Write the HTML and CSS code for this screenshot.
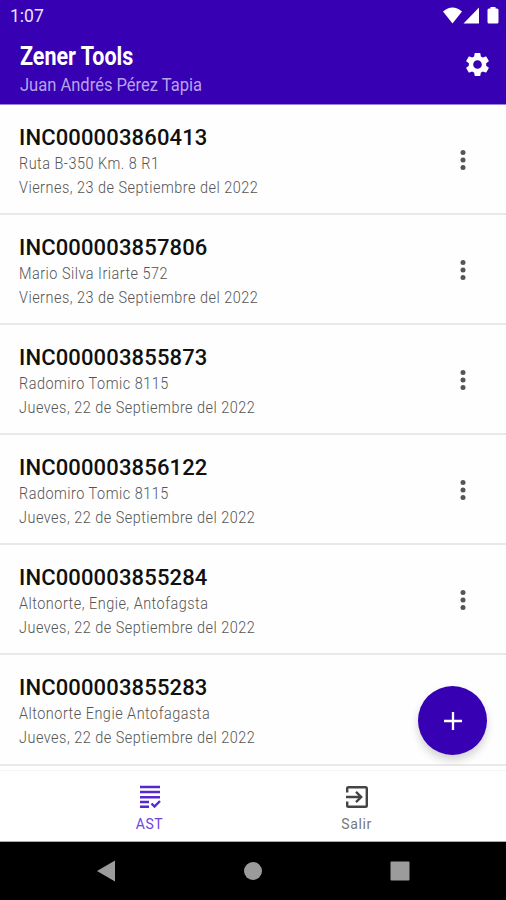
FILE: index.html
```html
<!DOCTYPE html>
<html lang="es">

<head>
  <meta charset="UTF-8">
  <meta name="viewport" content="width=device-width, initial-scale=1.0">
  <title>Zener Tools</title>
  <link rel="stylesheet" href="styles.css">
</head>

<body>

  <header class="cabecera">
    <div class="estado">
      <span class="hora">1:07</span>
      <svg class="senales" width="56" height="18" viewBox="0 0 56 18">
        <path d="M0 4.500Q9.500-3.500 19 4.500L9.500 16.500z" />
        <path d="M20.500 16.500L36 .5v16z" />
        <path d="M47.500 0h5v1.500h1.500q1.500 0 1.500 1.500v12q0 1.500-1.500 1.500h-8q-1.500 0-1.500-1.500V3q0-1.500 1.500-1.500h1.500z" />
      </svg>
    </div>
    <div class="barra">
      <div>
        <h1 class="titulo"><span>Zener Tools</span></h1>
        <p class="usuario"><span>Juan Andrés Pérez Tapia</span></p>
      </div>
      <svg class="ajustes" width="29" height="29" viewBox="0 0 24 24">
        <path d="M19.140 12.940c.04-.3.060-.61.060-.94 0-.32-.02-.64-.07-.94l2.030-1.580c.18-.14.230-.41.120-.61l-1.920-3.320c-.12-.22-.37-.29-.59-.22l-2.390.96c-.5-.38-1.030-.7-1.620-.94l-.36-2.540c-.04-.24-.24-.41-.48-.41h-3.840c-.24 0-.43.170-.47.410l-.36 2.540c-.59.240-1.130.570-1.620.940l-2.390-.96c-.22-.08-.47 0-.59.220L2.740 8.870c-.12.210-.08.470.12.610l2.030 1.580c-.05.3-.09.630-.09.940s.02.640.07.940l-2.030 1.580c-.18.140-.23.410-.12.610l1.920 3.320c.12.220.37.290.59.220l2.390-.96c.5.380 1.030.7 1.620.940l.36 2.540c.05.240.24.410.48.410h3.840c.24 0 .44-.17.470-.41l.36-2.540c.59-.24 1.130-.56 1.620-.94l2.390.96c.22.080.47 0 .59-.22l1.920-3.320c.12-.22.070-.47-.12-.61l-2.010-1.580zM12 15.600c-1.980 0-3.600-1.620-3.600-3.600s1.620-3.600 3.600-3.600 3.600 1.620 3.600 3.600-1.620 3.600-3.600 3.600z" />
      </svg>
    </div>
  </header>

  <main class="lista">
    <article class="item">
      <div>
        <h2>INC000003860413</h2>
        <p><span>Ruta B-350 Km. 8 R1</span></p>
        <p><span>Viernes, 23 de Septiembre del 2022</span></p>
      </div>
      <svg class="menu" width="6" height="22" viewBox="0 0 6 22"><circle cx="3" cy="3.500" r="2.500" /><circle cx="3" cy="11" r="2.500" /><circle cx="3" cy="18.500" r="2.500" /></svg>
    </article>
    <article class="item">
      <div>
        <h2>INC000003857806</h2>
        <p><span>Mario Silva Iriarte 572</span></p>
        <p><span>Viernes, 23 de Septiembre del 2022</span></p>
      </div>
      <svg class="menu" width="6" height="22" viewBox="0 0 6 22"><circle cx="3" cy="3.500" r="2.500" /><circle cx="3" cy="11" r="2.500" /><circle cx="3" cy="18.500" r="2.500" /></svg>
    </article>
    <article class="item">
      <div>
        <h2>INC000003855873</h2>
        <p><span>Radomiro Tomic 8115</span></p>
        <p><span>Jueves, 22 de Septiembre del 2022</span></p>
      </div>
      <svg class="menu" width="6" height="22" viewBox="0 0 6 22"><circle cx="3" cy="3.500" r="2.500" /><circle cx="3" cy="11" r="2.500" /><circle cx="3" cy="18.500" r="2.500" /></svg>
    </article>
    <article class="item">
      <div>
        <h2>INC000003856122</h2>
        <p><span>Radomiro Tomic 8115</span></p>
        <p><span>Jueves, 22 de Septiembre del 2022</span></p>
      </div>
      <svg class="menu" width="6" height="22" viewBox="0 0 6 22"><circle cx="3" cy="3.500" r="2.500" /><circle cx="3" cy="11" r="2.500" /><circle cx="3" cy="18.500" r="2.500" /></svg>
    </article>
    <article class="item">
      <div>
        <h2>INC000003855284</h2>
        <p><span>Altonorte, Engie, Antofagsta</span></p>
        <p><span>Jueves, 22 de Septiembre del 2022</span></p>
      </div>
      <svg class="menu" width="6" height="22" viewBox="0 0 6 22"><circle cx="3" cy="3.500" r="2.500" /><circle cx="3" cy="11" r="2.500" /><circle cx="3" cy="18.500" r="2.500" /></svg>
    </article>
    <article class="item">
      <div>
        <h2>INC000003855283</h2>
        <p><span>Altonorte Engie Antofagasta</span></p>
        <p><span>Jueves, 22 de Septiembre del 2022</span></p>
      </div>
    </article>
    <button class="agregar" aria-label="Agregar">
      <svg width="18" height="18" viewBox="0 0 18 18"><path d="M9 0v18M0 9h18" /></svg>
    </button>
  </main>

  <nav class="pestanas">
    <a class="pestana activa">
      <svg width="22" height="24" viewBox="0 0 22 24">
        <path d="M1 2h20M1 7h20M1 12.200h20M1 17h9M1 21.800h9M12.500 18.500l3 3 5.500-5.500" />
      </svg>
      <span>AST</span>
    </a>
    <a class="pestana">
      <svg width="24" height="24" viewBox="0 0 24 24">
        <path d="M2.200 7.500v-4q0-1.300 1.300-1.300h17q1.300 0 1.300 1.300v17q0 1.300-1.300 1.300h-17q-1.300 0-1.300-1.300v-4M1 12h15M11 6.800l5.200 5.200-5.200 5.200" />
      </svg>
      <span>Salir</span>
    </a>
  </nav>

  <footer class="sistema">
    <svg width="18" height="22" viewBox="0 0 18 22"><path d="M0 11L18 .5v21z" /></svg>
    <svg width="18" height="22" viewBox="0 0 18 22"><circle cx="9" cy="11" r="9" /></svg>
    <svg width="20" height="22" viewBox="0 0 20 22"><rect x=".5" y="1.500" width="19" height="19" rx="1" /></svg>
  </footer>

</body>

</html>
```
FILE: styles.css
```css
* {
  box-sizing: border-box;
}

body {
  display: flex;
  flex-direction: column;
  margin: 0;
  width: 506px;
  height: 900px;
  overflow: hidden;
  background-color: #fefefe;
  font-family: Roboto, sans-serif;
}

h1, h2, p {
  margin: 0;
  white-space: nowrap;
}

.cabecera {
  height: 105px;
  background-color: #3700b3;
  border-bottom: 1px solid #9b85dc;
  color: white;
  fill: white;
}

.estado {
  display: flex;
  justify-content: space-between;
  height: 32px;
  padding: 7px 7px 0 10px;
}

.hora {
  font-size: 17.500px;
  line-height: 18px;
  color: #e9e2fb;
}

.barra {
  display: flex;
  justify-content: space-between;
  padding: 10px 14px 0 20px;
}

.titulo {
  font-size: 25px;
  font-weight: 700;
  line-height: 29px;
}

.usuario {
  font-size: 19px;
  line-height: 27px;
  color: #b7a3ec;
}

/* letra condensada */
.titulo span,
.usuario span,
.item p span {
  display: inline-block;
  transform: scaleX(0.87);
  transform-origin: left;
}

.titulo span {
  transform: scaleX(0.86);
}

.item p span {
  transform: scaleX(0.85);
}

.ajustes {
  margin-top: 8px;
}

.lista {
  position: relative;
  height: 665px;
}

.item {
  display: flex;
  justify-content: space-between;
  height: 110.100px;
  padding: 19px 40px 0 19px;
  border-bottom: 2px solid #e9e9e9;
}

.item h2 {
  margin-bottom: 1px;
  font-size: 22px;
  font-weight: 500;
  line-height: 27px;
  letter-spacing: 0.150px;
  color: #101010;
}

.item p {
  font-size: 17px;
  font-weight: 300;
  line-height: 23.500px;
  letter-spacing: 0.580px;
  color: #555;
}

.menu {
  margin-top: 25px;
  fill: #555;
}

.agregar {
  position: absolute;
  right: 19px;
  bottom: 15px;
  display: flex;
  align-items: center;
  justify-content: center;
  width: 69px;
  height: 69px;
  padding: 0;
  border: 0;
  border-radius: 50%;
  background-color: #3700b3;
  box-shadow: 0 5px 8px rgba(0, 0, 0, 0.18);
}

.agregar path {
  fill: none;
  stroke: white;
  stroke-width: 2.300;
}

.pestanas {
  display: flex;
  justify-content: center;
  height: 72px;
  border-top: 1px solid #f5f5f5;
  border-bottom: 1px solid #aaa;
  background-color: white;
}

.pestana {
  display: flex;
  flex-direction: column;
  align-items: center;
  width: 207px;
  padding-top: 14px;
  font-size: 14px;
  line-height: 18px;
  letter-spacing: 0.600px;
  color: #777;
}

.pestana span {
  margin-top: 6px;
}

.pestana path {
  fill: none;
  stroke: #444;
  stroke-width: 2.400;
}

.activa {
  color: #6c45dc;
}

.activa path {
  stroke: #5429d0;
}

.sistema {
  display: flex;
  justify-content: space-between;
  flex: 1;
  padding: 18px 96px 0 97px;
  background-color: black;
  fill: #9b9b9b;
}
```
